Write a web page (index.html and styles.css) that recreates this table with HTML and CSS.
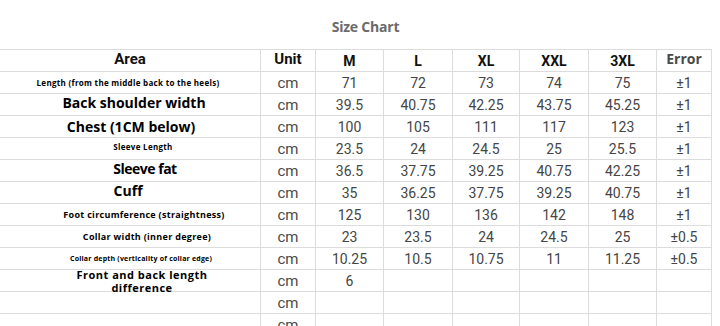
FILE: index.html
```html
<!DOCTYPE html>
<html>
<head>
<meta charset="utf-8">
<link rel="stylesheet" href="styles.css">
</head>
<body>
<div class="page">
  <h1 class="title">Size Chart</h1>
  <div class="chart">
    <div class="cell head lbl-h">Area</div><div class="cell head lbl-h">Unit</div><div class="cell head size">M</div><div class="cell head size">L</div><div class="cell head size">XL</div><div class="cell head size">XXL</div><div class="cell head size">3XL</div><div class="cell head err">Error</div>

    <div class="cell lbl s8 l4">Length (from the middle back to the heels)</div><div class="cell unit">cm</div><div class="cell">71</div><div class="cell">72</div><div class="cell">73</div><div class="cell">74</div><div class="cell">75</div><div class="cell">±1</div>

    <div class="cell lbl s14 r8 up2">Back shoulder width</div><div class="cell unit">cm</div><div class="cell">39.5</div><div class="cell">40.75</div><div class="cell">42.25</div><div class="cell">43.75</div><div class="cell">45.25</div><div class="cell">±1</div>

    <div class="cell lbl s14 r2">Chest (1CM below)</div><div class="cell unit">cm</div><div class="cell">100</div><div class="cell">105</div><div class="cell">111</div><div class="cell">117</div><div class="cell">123</div><div class="cell">±1</div>

    <div class="cell lbl s8 r26 up2">Sleeve Length</div><div class="cell unit">cm</div><div class="cell">23.5</div><div class="cell">24</div><div class="cell">24.5</div><div class="cell">25</div><div class="cell">25.5</div><div class="cell">±1</div>

    <div class="cell lbl s14 tight r30 up3">Sleeve fat</div><div class="cell unit">cm</div><div class="cell">36.5</div><div class="cell">37.75</div><div class="cell">39.25</div><div class="cell">40.75</div><div class="cell">42.25</div><div class="cell">±1</div>

    <div class="cell lbl s14 l4 up3">Cuff</div><div class="cell unit">cm</div><div class="cell">35</div><div class="cell">36.25</div><div class="cell">37.75</div><div class="cell">39.25</div><div class="cell">40.75</div><div class="cell">±1</div>

    <div class="cell lbl s9 r28">Foot circumference (straightness)</div><div class="cell unit">cm</div><div class="cell">125</div><div class="cell">130</div><div class="cell">136</div><div class="cell">142</div><div class="cell">148</div><div class="cell">±1</div>

    <div class="cell lbl s9 r34">Collar width (inner degree)</div><div class="cell unit">cm</div><div class="cell">23</div><div class="cell">23.5</div><div class="cell">24</div><div class="cell">24.5</div><div class="cell">25</div><div class="cell">±0.5</div>

    <div class="cell lbl s7 r22">Collar depth (verticality of collar edge)</div><div class="cell unit">cm</div><div class="cell">10.25</div><div class="cell">10.5</div><div class="cell">10.75</div><div class="cell">11</div><div class="cell">11.25</div><div class="cell">±0.5</div>

    <div class="cell lbl s11 r24">Front and back length<br>difference</div><div class="cell unit">cm</div><div class="cell">6</div><div class="cell"></div><div class="cell"></div><div class="cell"></div><div class="cell"></div><div class="cell"></div>

    <div class="cell lbl"></div><div class="cell unit">cm</div><div class="cell"></div><div class="cell"></div><div class="cell"></div><div class="cell"></div><div class="cell"></div><div class="cell"></div>

    <div class="cell lbl"></div><div class="cell unit">cm</div><div class="cell"></div><div class="cell"></div><div class="cell"></div><div class="cell"></div><div class="cell"></div><div class="cell"></div>
  </div>
</div>
</body>
</html>
```

FILE: styles.css
```css
html, body {
  margin: 0;
  padding: 0;
  background: #ffffff;
  overflow: hidden;
}
.page {
  width: 720px;
  height: 326px;
  overflow: hidden;
}
.title {
  margin: 0;
  height: 49px;
  box-sizing: border-box;
  padding: 18px 0 0 11px;
  text-align: center;
  font-family: "Open Sans", sans-serif;
  font-weight: 700;
  font-size: 14px;
  line-height: 18px;
  color: #6b6b6b;
  letter-spacing: -0.2px;
}
.chart {
  display: grid;
  grid-template-columns: 261px 55px 68px 69px 67px 69px 68px 55px;
  grid-auto-rows: 22px;
  width: 712px;
  border-top: 1px solid #dcdcdc;
}
.cell {
  box-sizing: border-box;
  border-right: 1px solid #dcdcdc;
  border-bottom: 1px solid #dcdcdc;
  display: flex;
  align-items: center;
  justify-content: center;
  white-space: nowrap;
  text-align: center;
  font-family: Roboto, "Liberation Sans", sans-serif;
  font-size: 14px;
  line-height: 16px;
  color: #454545;
}
.unit {
  font-size: 15px;
  color: #4a4a4a;
}
.head {
  font-weight: 700;
  color: #111111;
  padding-bottom: 4px;
}
.lbl-h {
  font-size: 15px;
}
.size {
  padding-bottom: 0;
}
.err {
  font-family: "Open Sans", sans-serif;
  color: #4a4a4a;
  font-size: 14px;
}
.lbl {
  font-family: "Open Sans", sans-serif;
  font-weight: 700;
  color: #000000;
  overflow: visible;
}
.s7 { font-size: 7px; line-height: 10px; letter-spacing: 0.2px; }
.s8 { font-size: 8px; line-height: 11px; letter-spacing: 0.3px; }
.s9 { font-size: 9px; line-height: 12px; letter-spacing: 0.3px; }
.s11 { font-size: 11px; line-height: 13px; letter-spacing: 0.5px; }
.s14 { font-size: 14px; line-height: 17px; }
.tight { letter-spacing: -0.5px; }
.up2 { padding-bottom: 4px; }
.up3 { padding-bottom: 5px; }
.l4 { padding-right: 4px; }
.r2 { padding-left: 2px; }
.r8 { padding-left: 8px; }
.r22 { padding-left: 22px; }
.r24 { padding-left: 24px; }
.r26 { padding-left: 26px; }
.r28 { padding-left: 28px; }
.r30 { padding-left: 30px; }
.r34 { padding-left: 34px; }
```
